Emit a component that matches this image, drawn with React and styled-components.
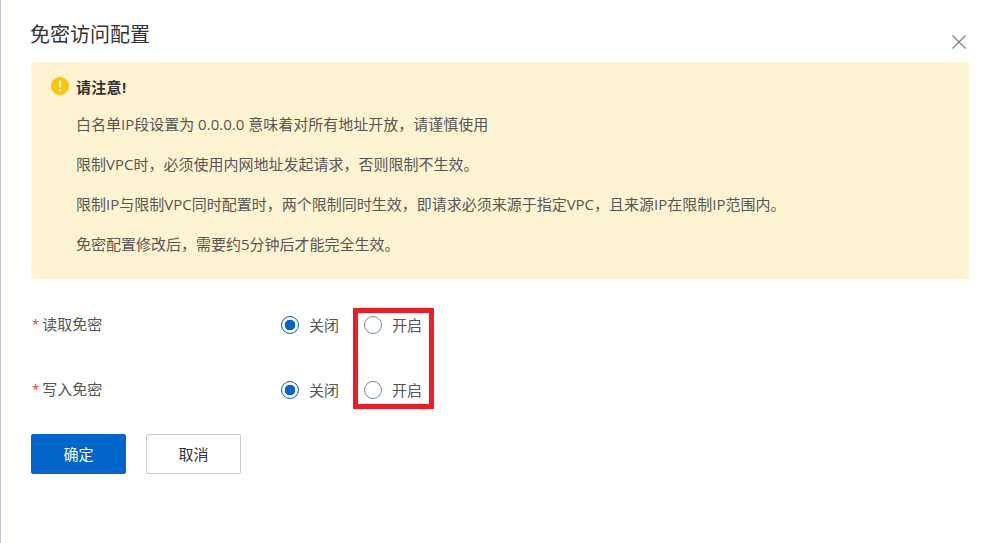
import React from 'react';
import styled, { createGlobalStyle } from 'styled-components';

const GlobalStyle = createGlobalStyle`
  html, body {
    margin: 0;
    padding: 0;
    background: #fff;
  }
  body {
    font-family: "Open Sans", "Noto Sans CJK SC", sans-serif;
  }
`;

const notes = [
  '白名单IP段设置为 0.0.0.0 意味着对所有地址开放，请谨慎使用',
  '限制VPC时，必须使用内网地址发起请求，否则限制不生效。',
  '限制IP与限制VPC同时配置时，两个限制同时生效，即请求必须来源于指定VPC，且来源IP在限制IP范围内。',
  '免密配置修改后，需要约5分钟后才能完全生效。',
];

const rows = ['读取免密', '写入免密'];

const Radio = ({ checked, label }) => (
  <RadioItem>
    <RadioCircle $checked={checked} />
    <RadioLabel>{label}</RadioLabel>
  </RadioItem>
);

const App = () => (
  <>
    <GlobalStyle />
    <Dialog>
      <Header>
        <Title>免密访问配置</Title>
        <Close aria-label="close">
          <svg width="14" height="14" viewBox="0 0 14 14">
            <path d="M0.5 0.5 L13.5 13.5 M13.5 0.5 L0.5 13.5" stroke="#7a7a7a" strokeWidth="1.2" fill="none" />
          </svg>
        </Close>
      </Header>
      <Notice>
        <NoticeHead>
          <svg width="18" height="18" viewBox="0 0 18 18">
            <circle cx="9" cy="9" r="9" fill="#ffc500" />
            <rect x="7.9" y="3.6" width="2.2" height="7.2" rx="1" fill="#fff" />
            <circle cx="9" cy="13.1" r="1.3" fill="#fff" />
          </svg>
          <NoticeTitle>请注意!</NoticeTitle>
        </NoticeHead>
        {notes.map((n) => (
          <NoticeLine key={n}>{n}</NoticeLine>
        ))}
      </Notice>
      <Form>
        {rows.map((r) => (
          <Row key={r}>
            <Label>
              <Star>*</Star>
              {r}
            </Label>
            <Radio checked label="关闭" />
            <Radio label="开启" />
          </Row>
        ))}
        <Highlight />
      </Form>
      <Actions>
        <Button $primary>确定</Button>
        <Button>取消</Button>
      </Actions>
    </Dialog>
  </>
);

export default App;

const Dialog = styled.div`
  box-sizing: border-box;
  width: 998px;
  height: 543px;
  overflow: hidden;
  padding: 0 29px 0 30px;
  border-left: 1px solid #bcc4d0;
  background: #fff;
`;

const Header = styled.div`
  height: 62px;
  display: flex;
  justify-content: space-between;
  align-items: flex-start;
`;

const Title = styled.h2`
  margin: 22px 0 0 -1px;
  font-size: 20px;
  line-height: 26px;
  font-weight: 400;
  color: #333;
`;

const Close = styled.button`
  margin: 35px 3px 0 0;
  padding: 0;
  width: 14px;
  height: 14px;
  display: block;
  border: 0;
  background: none;
  svg {
    display: block;
  }
`;

const Notice = styled.div`
  box-sizing: border-box;
  height: 217px;
  padding: 15px 20px 0;
  border-radius: 2px;
  background: #fff4d1;
  color: #555;
  font-size: 15px;
`;

const NoticeHead = styled.div`
  display: flex;
  align-items: center;
  gap: 7px;
  height: 18px;
  margin-bottom: 9px;
`;

const NoticeTitle = styled.span`
  font-weight: 700;
  color: #333;
  letter-spacing: 0.3px;
`;

const NoticeLine = styled.div`
  margin-left: 25px;
  height: 40px;
  line-height: 40px;
`;

const Form = styled.div`
  position: relative;
  padding-top: 29px;
`;

const Row = styled.div`
  display: flex;
  align-items: center;
  height: 34px;
  margin-bottom: 31px;
`;

const Label = styled.div`
  width: 250px;
  font-size: 15px;
  color: #555;
  margin-top: -3px;
`;

const Star = styled.span`
  color: #e03131;
  font-size: 13px;
  margin-right: 3px;
  margin-left: 1px;
  vertical-align: 1px;
`;

const RadioItem = styled.label`
  display: flex;
  align-items: center;
  width: 83px;
`;

const RadioCircle = styled.span`
  box-sizing: border-box;
  width: 18px;
  height: 18px;
  border-radius: 50%;
  border: 1px solid ${(p) => (p.$checked ? '#0f5ca8' : '#6c8dae')};
  background: ${(p) => (p.$checked ? 'radial-gradient(circle, #0066cc 0 5px, #fff 5.6px)' : '#fff')};
`;

const RadioLabel = styled.span`
  margin-left: 10px;
  font-size: 15px;
  color: #555;
  margin-top: -1px;
`;

const Highlight = styled.div`
  position: absolute;
  left: 322px;
  top: 29px;
  box-sizing: border-box;
  width: 81px;
  height: 101px;
  border: 5px solid #ee1c25;
`;

const Actions = styled.div`
  display: flex;
  gap: 20px;
  margin-top: -4px;
`;

const Button = styled.button`
  box-sizing: border-box;
  width: 95px;
  height: 40px;
  padding: 0 0 2px;
  border-radius: 2px;
  border: 1px solid ${(p) => (p.$primary ? '#0066cc' : '#c4c9d2')};
  background: ${(p) => (p.$primary ? '#0066cc' : '#fff')};
  color: ${(p) => (p.$primary ? '#fff' : '#333')};
  font-family: inherit;
  font-size: 15px;
`;
